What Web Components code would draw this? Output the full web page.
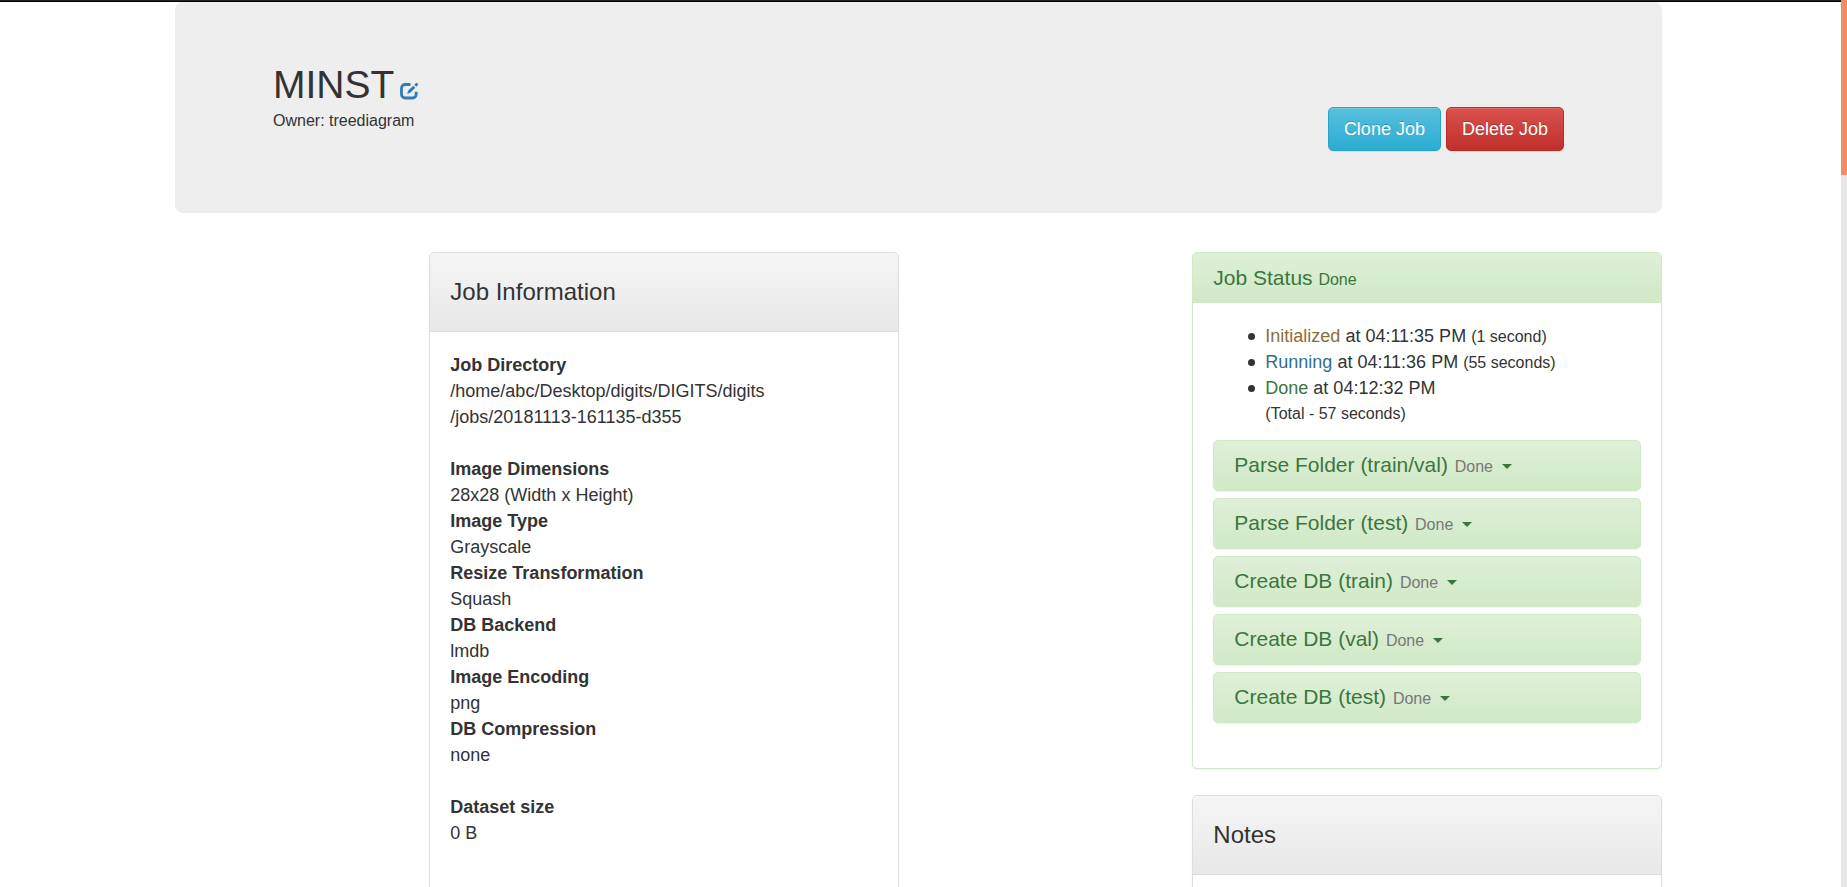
<!DOCTYPE html>
<html lang="en">
<head>
<meta charset="utf-8">
<title>MINST</title>
<style>
html { scrollbar-width: none; }
body { margin: 0; background: #fff; color: #333; font: 18px/26px "Liberation Sans", Arial, sans-serif; }
</style>
</head>
<body>
<job-page>
  <job-header slot="header" name="MINST" owner="treediagram"></job-header>
  <job-panel slot="info" heading="Job Information">
    <job-facts></job-facts>
  </job-panel>
  <job-panel slot="side" heading="Job Status" state="Done" variant="success">
    <job-timeline></job-timeline>
    <job-task name="Parse Folder (train/val)"></job-task>
    <job-task name="Parse Folder (test)"></job-task>
    <job-task name="Create DB (train)"></job-task>
    <job-task name="Create DB (val)"></job-task>
    <job-task name="Create DB (test)"></job-task>
  </job-panel>
  <job-panel slot="side" heading="Notes"></job-panel>
</job-page>
<page-scroll></page-scroll>

<script>
const define = (name, render) => customElements.define(name, class extends HTMLElement {
  constructor() {
    super();
    this.attachShadow({ mode: "open" });
  }
  connectedCallback() {
    this.shadowRoot.innerHTML = render(this);
  }
});

define("job-page", () => `
  <style>
    :host { display: block; }
    .nav { height: 2px; background: linear-gradient(#222 50%, #000 50%); }
    main { max-width: 1487px; margin: 0 auto; padding: 0 30px 0 20px; }
    .row { display: grid; grid-template-columns: repeat(12, minmax(0, 1fr)); column-gap: 39px; margin-top: 39px; align-items: start; }
    .info { grid-column: 3 / span 4; }
    .side { grid-column: 9 / span 4; display: flex; flex-direction: column; gap: 26px; }
  </style>
  <div class="nav"></div>
  <main>
    <slot name="header"></slot>
    <div class="row">
      <div class="info"><slot name="info"></slot></div>
      <div class="side"><slot name="side"></slot></div>
    </div>
  </main>`);

define("job-header", el => `
  <style>
    :host { display: flex; justify-content: space-between; align-items: flex-start; background: #eee; border-radius: 8px; padding: 61px 98px 62px; }
    h1 { margin: 0; display: flex; align-items: baseline; gap: 6px; font-size: 39px; line-height: 44px; font-weight: 400; }
    a { color: #337ab7; line-height: 18px; }
    svg { width: 19px; height: 18px; vertical-align: -2px; }
    p { margin: 0; font-size: 16px; line-height: 26px; padding: 1px 0 17px; }
    .actions { display: flex; gap: 5px; margin-top: 44px; }
    button { font: inherit; color: #fff; height: 44px; padding: 0 15px; border: 1px solid; border-radius: 5px;
      text-shadow: 0 -1px 0 rgba(0,0,0,.2); box-shadow: inset 0 1px 0 rgba(255,255,255,.15), 0 1px 1px rgba(0,0,0,.08); }
    .clone { background: linear-gradient(#5bc0de, #2aabd2) border-box; border-color: #28a4c9; }
    .delete { background: linear-gradient(#d9534f, #c12e2a) border-box; border-color: #b92c28; }
  </style>
  <div>
    <h1>${el.getAttribute("name")}<a href="#edit" aria-label="Edit name"><svg viewBox="0 0 19 18" aria-hidden="true">
      <path d="M10.500 2.500H5.200A3.700 3.700 0 0 0 1.500 6.200v6.100A3.700 3.700 0 0 0 5.200 16h7.300a3.700 3.700 0 0 0 3.700-3.700V9.800" fill="none" stroke="currentColor" stroke-width="2.800"/>
      <path d="M7.200 11.700l1-3.200 5.100-4.800 2 2-5 5zM14.300 2.700l1.700-1.700q.5-.5 1 0l1 1q.5.500 0 1L16.300 4.700z" fill="currentColor"/>
    </svg></a></h1>
    <p>Owner: ${el.getAttribute("owner")}</p>
  </div>
  <div class="actions">
    <button type="button" class="clone">Clone Job</button>
    <button type="button" class="delete">Delete Job</button>
  </div>`);

define("job-panel", el => {
  const success = el.getAttribute("variant") === "success";
  const state = el.getAttribute("state");
  return `
  <style>
    :host { display: block; --edge: ${success ? "#d0e9c6" : "#ddd"}; border: 1px solid var(--edge); border-radius: 5px; background: #fff; box-shadow: 0 1px 2px rgba(0,0,0,.06); }
    header { border-radius: 4px 4px 0 0; padding: 26px 20px; border-bottom: 1px solid var(--edge); background: linear-gradient(#f5f5f5, #e8e8e8); }
    h2 { margin: 0; font-size: 24px; line-height: 26px; font-weight: 400; }
    header.success { color: #3c763d; background: linear-gradient(#dff0d8, #d0e9c6); padding: 13px 20px 12px; }
    .success h2 { font-size: 21px; line-height: 24px; }
    small { font-size: 16px; line-height: 16px; }
    .body { padding: 20px 20px 38px; min-height: 52px; }
  </style>
  <header class="${success ? "success" : ""}"><h2>${el.getAttribute("heading")}${state ? ` <small>${state}</small>` : ""}</h2></header>
  <div class="body"><slot></slot></div>`;
});

define("job-facts", () => {
  const groups = [
    [["Job Directory", "/home/abc/Desktop/digits/DIGITS/digits<wbr>/jobs/20181113-161135-d355"]],
    [["Image Dimensions", "28x28 (Width x Height)"], ["Image Type", "Grayscale"], ["Resize Transformation", "Squash"],
     ["DB Backend", "lmdb"], ["Image Encoding", "png"], ["DB Compression", "none"]],
    [["Dataset size", "0 B"]]
  ];
  return `
  <style>
    :host { display: flex; flex-direction: column; gap: 26px; padding-bottom: 26px; }
    dl, dd { margin: 0; }
    dt { font-weight: 700; }
  </style>
  ${groups.map(g => `<dl>${g.map(([k, v]) => `<dt>${k}</dt><dd>${v}</dd>`).join("")}</dl>`).join("")}`;
});

define("job-timeline", () => `
  <style>
    :host { display: block; margin-bottom: 13px; }
    ul { margin: 0; padding-left: 35px; list-style: none; }
    li { display: flex; gap: 10px; }
    li::before { content: ""; flex: none; width: 7px; height: 7px; margin-top: 10px; border-radius: 50%; background: #333; }
    small { font-size: 16px; line-height: 16px; }
    .total { display: block; line-height: 26px; }
    .init { color: #8a6d3b; } .run { color: #31708f; } .done { color: #3c763d; }
  </style>
  <ul>
    <li><div><span class="init">Initialized</span> at 04:11:35 PM <small>(1 second)</small></div></li>
    <li><div><span class="run">Running</span> at 04:11:36 PM <small>(55 seconds)</small></div></li>
    <li><div><span class="done">Done</span> at 04:12:32 PM <small class="total">(Total - 57 seconds)</small></div></li>
  </ul>`);

define("job-task", el => `
  <style>
    :host { display: block; margin-bottom: 7px; }
    h3 { margin: 0; font-weight: 400; }
    button { display: block; width: 100%; text-align: left; font: inherit; font-size: 21px; line-height: 24px; color: #3c763d; padding: 12px 20px 13px;
      border: 1px solid #d0e9c6; border-radius: 5px; background: linear-gradient(#dff0d8, #d0e9c6); box-shadow: 0 1px 2px rgba(0,0,0,.06); }
    small { font-size: 16px; line-height: 16px; color: #777; margin-left: 1px; }
    .caret { display: inline-block; margin-left: 3px; vertical-align: middle; border: 5px solid transparent; border-top-color: currentColor; border-bottom: 0; }
  </style>
  <h3><button type="button" aria-expanded="false">${el.getAttribute("name")} <small>Done</small> <span class="caret"></span></button></h3>`);

define("page-scroll", () => `
  <style>
    :host { position: fixed; top: 0; right: 0; bottom: 0; width: 6px; background: #e6e6e6; }
    div { height: 175px; background: #f08d67; }
  </style>
  <div></div>`);
</script>
</body>
</html>
